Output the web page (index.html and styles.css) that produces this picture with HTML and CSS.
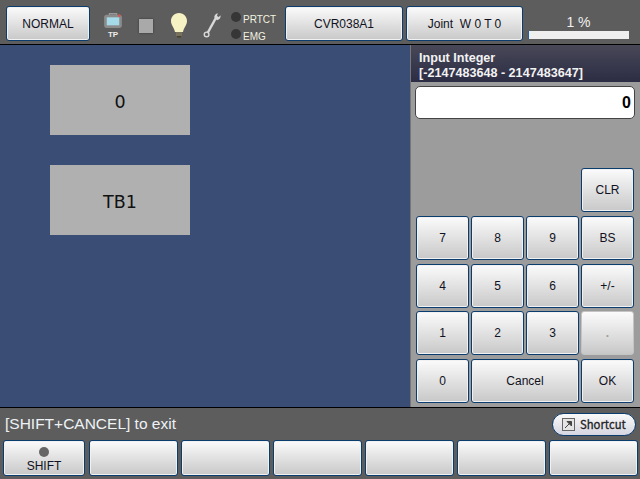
FILE: index.html
```html
<!DOCTYPE html>
<html lang="en">
  <head>
    <meta charset="UTF-8" />
    <title>Input Integer</title>
    <link rel="stylesheet" href="styles.css">
  </head>
  <body>
    <header class="topbar">
      <button class="knap mode">NORMAL</button>
      <div class="tp">
        <svg width="20" height="16" viewBox="0 0 22 18">
          <path d="M7 4V2h8v2" fill="none" stroke="#999" stroke-width="1.5" />
          <rect x="1" y="3" width="20" height="15" rx="3" fill="#8b8b8b" />
          <rect x="4" y="6" width="14" height="9" fill="#a5dbe8" />
          <circle cx="18" cy="4" r="1.5" fill="#d6534e" />
        </svg>
        <span>TP</span>
      </div>
      <div class="stop"></div>
      <svg class="paere" width="18" height="26" viewBox="0 0 18 26">
        <path d="M9 1C4 1 1 5 1 9c0 4 3 6 4 11h8c1-5 4-7 4-11 0-4-3-8-8-8z" fill="#f6f2c4" />
        <rect x="6" y="20" width="6" height="4" fill="#77705a" />
        <rect x="7" y="24" width="4" height="1.5" fill="#46412f" />
      </svg>
      <svg class="noegle" width="18" height="28" viewBox="0 0 20 28">
        <path d="M15 5L5 23" fill="none" stroke="#d8d8d8" stroke-width="2.6" />
        <path d="M12.5 5.5c0-2 1.5-4 4-4.5l-1 3 2 1.2 2-2c.4 2.5-1 5-4 5.500z" fill="#d8d8d8" />
        <circle cx="4" cy="24.500" r="2.600" fill="none" stroke="#d8d8d8" stroke-width="1.6" />
      </svg>
      <div class="lamper">
        <div class="lampe"><i></i>PRTCT</div>
        <div class="lampe"><i></i>EMG</div>
      </div>
      <button class="knap program">CVR038A1</button>
      <button class="knap joint">Joint&nbsp; W 0 T 0</button>
      <div class="status">
        <span>1 %</span>
        <div class="bar"><div class="fyld" style="width: 1%"></div></div>
      </div>
    </header>

    <main>
      <section class="felter">
        <div class="felt">0</div>
        <div class="felt">TB1</div>
      </section>
      <aside class="panel">
        <h2>Input Integer<br />[-2147483648 - 2147483647]</h2>
        <div class="input">0</div>
        <div class="tastatur">
          <button class="knap clr">CLR</button>
          <button class="knap">7</button>
          <button class="knap">8</button>
          <button class="knap">9</button>
          <button class="knap">BS</button>
          <button class="knap">4</button>
          <button class="knap">5</button>
          <button class="knap">6</button>
          <button class="knap">+/-</button>
          <button class="knap">1</button>
          <button class="knap">2</button>
          <button class="knap">3</button>
          <button class="knap inaktiv">.</button>
          <button class="knap">0</button>
          <button class="knap cancel">Cancel</button>
          <button class="knap">OK</button>
        </div>
      </aside>
    </main>

    <div class="besked">
      <span>[SHIFT+CANCEL] to exit</span>
      <button class="shortcut">
        <svg width="13" height="13" viewBox="0 0 13 13">
          <rect x="0.500" y="0.500" width="12" height="12" fill="#e4e4e4" stroke="#666" />
          <path d="M3 10l6-6M5 3.500h4.500V8z" fill="#444" stroke="#444" />
        </svg>
        Shortcut
      </button>
    </div>

    <footer class="fkeys">
      <button class="knap shift"><i></i>SHIFT</button>
      <button class="knap"></button>
      <button class="knap"></button>
      <button class="knap"></button>
      <button class="knap"></button>
      <button class="knap"></button>
      <button class="knap"></button>
    </footer>
  </body>
</html>
```

FILE: styles.css
```css
html,
body {
  margin: 0;
  height: 479px;
  overflow: hidden;
}
body {
  display: flex;
  flex-direction: column;
  background-color: #5d5d5d;
  font-family: "Liberation Sans", Arial, sans-serif;
}

.knap {
  margin: 0;
  padding: 0;
  border: 1px solid #0b3c6e;
  border-radius: 3px;
  background: linear-gradient(#fbfbfb, #c8c8c8);
  box-shadow: inset 0 0 0 1px #f1f1f1;
  color: #111122;
  font-family: inherit;
  font-size: 12px;
}

/* top bar */
.topbar {
  display: flex;
  align-items: center;
  flex: none;
  height: 45px;
  box-sizing: border-box;
  padding: 6px 0 3px 6px;
  border-bottom: 1px solid #000;
}
.mode {
  width: 84px;
  height: 35px;
}
.tp {
  display: flex;
  flex-direction: column;
  align-items: center;
  width: 20px;
  margin: 5px 0 0 13px;
  color: #eee;
  font-size: 8px;
  font-weight: bold;
  line-height: 10px;
}
.tp span {
  margin-top: 2px;
}
.stop {
  width: 14px;
  height: 14px;
  margin: 5px 0 0 16px;
  background-color: #a9a9a9;
  box-shadow: 0 0 2px #333;
}
.paere {
  margin: 3px 0 0 17px;
}
.noegle {
  margin: 2px 0 0 15px;
}
.lamper {
  width: 54px;
  margin: 8px 0 0 10px;
}
.lampe {
  display: flex;
  align-items: center;
  gap: 2px;
  height: 17px;
  color: #f2f2e0;
  font-size: 10px;
}
.lampe i {
  width: 10px;
  height: 10px;
  margin-top: -4px;
  border-radius: 50%;
  background-color: #363636;
}
.program {
  width: 118px;
  height: 35px;
}
.joint {
  width: 117px;
  height: 35px;
  margin-left: 3px;
}
.status {
  display: flex;
  flex-direction: column;
  align-items: center;
  width: 101px;
  margin: 7px 0 0 5px;
  color: #f0f0f0;
  font-size: 14px;
}
.status span {
  height: 17px;
  margin: -1px 0 0;
}
.bar {
  width: 100%;
  height: 8px;
  background-color: #efefef;
}
.fyld {
  height: 100%;
  background-color: #1f5fa8;
}

/* middle */
main {
  display: flex;
  flex: none;
  height: 362px;
  background-color: #3a4d74;
}
.felter {
  display: flex;
  flex-direction: column;
  gap: 30px;
  width: 410px;
  box-sizing: border-box;
  padding: 20px 0 0 50px;
}
.felt {
  display: flex;
  align-items: center;
  justify-content: center;
  width: 140px;
  height: 70px;
  box-sizing: border-box;
  padding-top: 3px;
  background-color: #b0b0b0;
  color: #111;
  font-family: "DejaVu Sans", sans-serif;
  font-size: 17.500px;
}
.panel {
  width: 230px;
  box-sizing: border-box;
  border-left: 1px solid #777;
  background-color: #9c9c9c;
}
.panel h2 {
  height: 37px;
  box-sizing: border-box;
  margin: 0;
  padding: 6px 0 0 8px;
  background: linear-gradient(#484858, #2c2c44);
  color: #f2f2f2;
  font-size: 12.600px;
  line-height: 15px;
}
.input {
  height: 33px;
  box-sizing: border-box;
  margin: 4px 5px 0 4px;
  padding-right: 3px;
  border: 1px solid #444;
  border-radius: 5px;
  background-color: #fff;
  color: #000;
  font-size: 16px;
  font-weight: bold;
  line-height: 31px;
  text-align: right;
}
.tastatur {
  display: grid;
  grid-template-columns: repeat(4, 53px);
  grid-template-rows: repeat(5, 44px);
  gap: 3.750px 2px;
  margin: 49px 0 0 5px;
}
.clr {
  grid-column: 4;
}
.cancel {
  grid-column: span 2;
}
.inaktiv {
  border-color: #c4c4c4;
  box-shadow: none;
  color: #a0a0a0;
  font-weight: bold;
}

/* bottom */
.besked {
  display: flex;
  align-items: center;
  justify-content: space-between;
  flex: none;
  height: 33px;
  box-sizing: border-box;
  padding: 0 4px 0 5px;
  border-top: 1px solid #000;
  color: #eef2f5;
  font-size: 15.500px;
}
.shortcut {
  display: flex;
  align-items: center;
  gap: 5px;
  width: 84px;
  height: 23px;
  padding: 0 0 0 9px;
  border: 1px solid #0b3c6e;
  border-radius: 12px;
  background: linear-gradient(#fafafa, #d5d5e2);
  color: #222;
  font-family: "Noto Sans CJK JP", sans-serif;
  font-size: 11.300px;
  -webkit-text-stroke: 0.3px #222;
}
.fkeys {
  display: grid;
  grid-template-columns: 83px repeat(6, 89px);
  gap: 3px;
  height: 36px;
  margin: 0 2px 0 3px;
}
.shift {
  display: flex;
  flex-direction: column;
  align-items: center;
  justify-content: flex-end;
  gap: 2px;
  width: 82px;
  padding-bottom: 2px;
}
.shift i {
  width: 10px;
  height: 10px;
  border-radius: 50%;
  background-color: #666;
}
```
